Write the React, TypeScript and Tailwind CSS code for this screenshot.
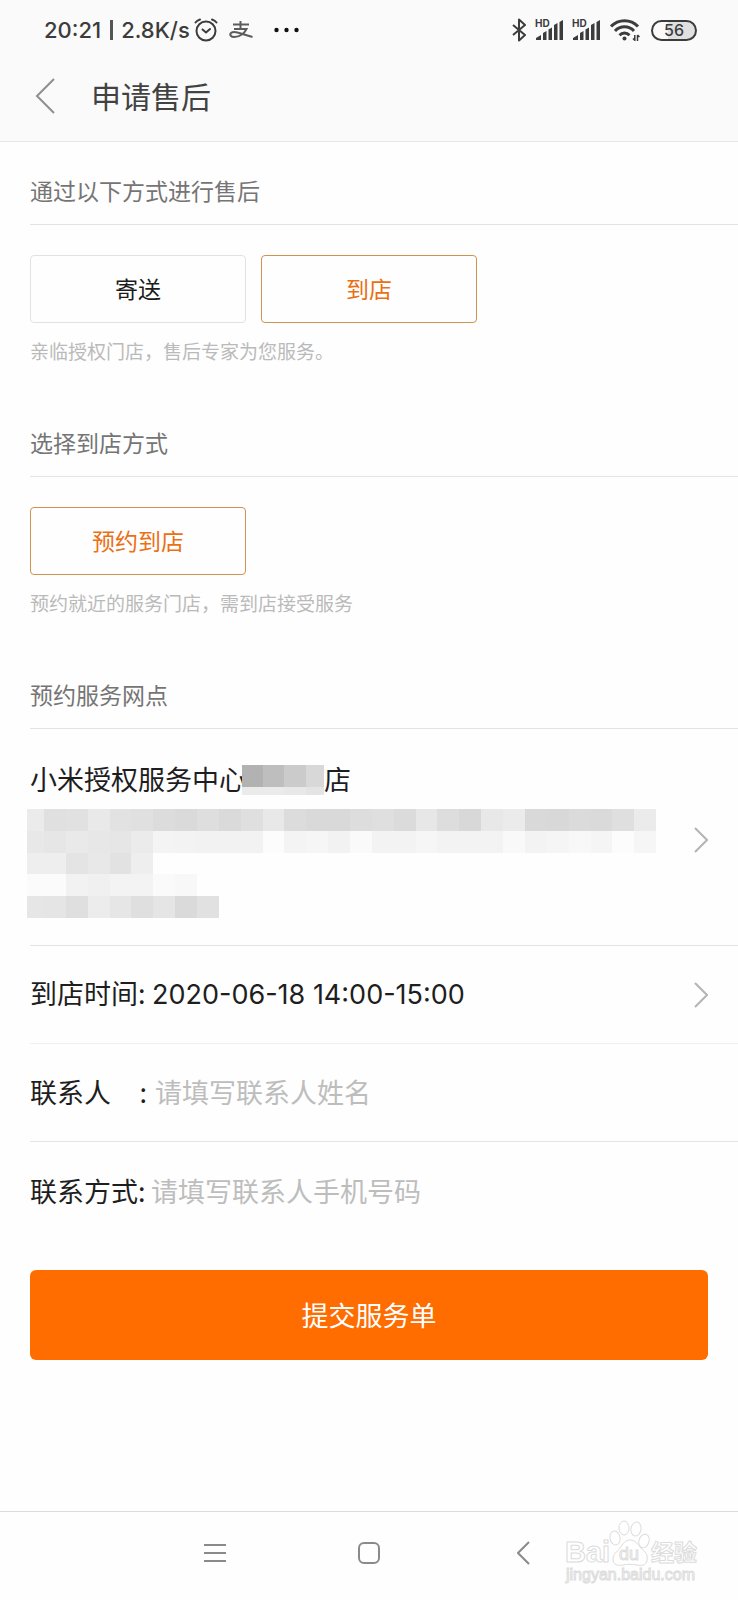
import { useState } from "react";
import type { ReactNode } from "react";

const mosaicRows = [
  "eb e0 e1 e9 e2 e0 dc da de da df e8 dc d9 d9 dd df db e7 dd d8 e8 eb d9 d8 db da df eb",
  "e8 e6 e9 e7 e6 eb f4 f3 f2 f2 f2 fc f4 f6 f2 fa f3 f3 f6 f3 f3 f3 f9 f3 f5 f8 f5 fc f6",
  "ee ee e4 e8 e2 ee",
  "fb fb f2 f0 f3 f3 fa f8",
  "e6 e5 df ec e6 df e5 da e1",
].map((row) => row.split(" "));

// Redacted address: the first column is narrower than the rest
function AddressMosaic() {
  const edge = (col: number) => (col === 0 ? 0 : Math.round(17 + (col - 1) * 21.86));
  const top = (row: number) => Math.round(row * 21.8);
  return (
    <svg width="629" height="109" viewBox="0 0 629 109" className="-ml-[3px] max-w-none" shapeRendering="crispEdges" aria-hidden="true">
      {mosaicRows.map((row, y) =>
        row.map((shade, x) => (
          <rect
            key={`${x}-${y}`}
            x={edge(x)}
            y={top(y)}
            width={edge(x + 1) - edge(x)}
            height={top(y + 1) - top(y)}
            fill={`#${shade}${shade}${shade}`}
          />
        ))
      )}
    </svg>
  );
}

function NameMosaic() {
  return (
    <svg width="82" height="32" viewBox="0 -2 82 32" className="-ml-1" shapeRendering="crispEdges" aria-hidden="true">
      <path fill="#b2b2b2" d="M0 0h21v22H0z" />
      <path fill="#bebebe" d="M21 0h21v22H21z" />
      <path fill="#cbcbcb" d="M42 0h22v22H42z" />
      <path fill="#d8d8d8" d="M64 0h18v22H64z" />
      <path fill="#ebebeb" d="M0 22h42v8H0z" />
      <path fill="#e8e8e8" d="M42 22h22v8H42z" />
      <path fill="#e4e4e4" d="M64 22h18v8H64z" />
    </svg>
  );
}

function Signal() {
  return (
    <svg width="28" height="26" viewBox="0 -4 28 26" fill="#3c3c3c" className="-mt-1" aria-hidden="true">
      <text x="0" y="8" fontSize="10" fontWeight="700" fontFamily="Inter, sans-serif">HD</text>
      <path d="M1 21v-2l5-3v5zM8 21v-7l3.500-2v9zM13.500 21V10.500l3.500-2V21zM19 21V6l3.500-2v17zM24.500 21V3L28 1v20z" />
    </svg>
  );
}

function StatusBar() {
  return (
    <div className="flex h-15 items-center justify-between pl-[44px] pr-[41px] text-[#3c3c3c]">
      <div className="flex items-center">
        <span className="font-[Inter,sans-serif] text-[22px] font-medium">20:21</span>
        <span className="mr-2 ml-[9px] h-5 w-[3px] bg-[#555]" />
        <span className="font-[Inter,sans-serif] text-[22px] font-medium">2.8K/s</span>
        <svg width="24" height="24" viewBox="0 0 24 24" className="ml-1" fill="none" stroke="currentColor" strokeWidth="2" strokeLinecap="round" strokeLinejoin="round" aria-hidden="true">
          <circle cx="12" cy="13" r="9.500" />
          <path d="M8.500 11.500l3.500 3 4-3.500M1.500 4.500q1.500-2 4.500-3M22.500 4.500q-1.500-2-4.500-3" />
        </svg>
        <svg width="24" height="18" viewBox="0 0 24 18" className="ml-[11px]" fill="none" stroke="#5c5c5c" strokeWidth="2" aria-hidden="true">
          <path d="M4 3.500h16M11.500 0v8M5 8h12.500C15.500 12 11 16 5.500 16C1.500 16 0.500 13.500 2 12C5 9.500 10 12 23.500 16" />
        </svg>
        <svg width="25" height="6" viewBox="0 0 25 6" className="ml-[21px]" fill="#111" aria-hidden="true">
          <circle cx="2.500" cy="3" r="2.200" />
          <circle cx="12.500" cy="3" r="2.200" />
          <circle cx="22.500" cy="3" r="2.200" />
        </svg>
      </div>
      <div className="flex items-center">
        <svg width="14" height="24" viewBox="0 0 14 24" fill="none" stroke="currentColor" strokeWidth="2" strokeLinejoin="round" aria-hidden="true">
          <path d="M1 7l12 10-6 5.500V1.500L13 7 1 17" />
        </svg>
        <span className="ml-[9px] flex gap-[9px]">
          <Signal />
          <Signal />
        </span>
        <svg width="30" height="24" viewBox="0 0 30 24" className="ml-2.5" fill="none" stroke="currentColor" strokeWidth="3" aria-hidden="true">
          <path d="M1 8.500a18.500 18.500 0 0 1 27 0M5 13a13 13 0 0 1 19 0M9.500 17.200a7 7 0 0 1 10 0" />
          <circle cx="14.500" cy="20.500" r="2" fill="currentColor" stroke="none" />
          <path strokeWidth="1.500" d="M24.800 17v6M27.500 17v6M23 20.500l2 2M29.500 19l-2-2" />
        </svg>
        <span className="ml-[11px] flex h-[21px] w-[46px] items-center justify-center rounded-full border-2 border-[#3c3c3c] bg-linear-to-r from-transparent from-35% via-[#e0e0e0] via-35% to-[#e0e0e0] to-90% font-[Inter,sans-serif] text-base leading-none font-medium">
          56
        </span>
      </div>
    </div>
  );
}

type SectionProps = {
  title: string;
  children: ReactNode;
};

function Section({ title, children }: SectionProps) {
  return (
    <section className="pl-[30px]">
      <h2 className="border-b border-[#e4e4e4] pt-8 pb-[18px] text-[23px] leading-8 text-[#757575]">{title}</h2>
      {children}
    </section>
  );
}

type OptionProps = {
  label: string;
  active: boolean;
  onClick?: () => void;
};

function Option({ label, active, onClick }: OptionProps) {
  return (
    <button
      type="button"
      aria-pressed={active}
      onClick={onClick}
      className={`h-[68px] w-[216px] rounded border pb-0.5 text-[23px] ${
        active ? "border-[#cf9350] text-[#ea7014]" : "border-[#e2e2e2] text-[#1c1c1c]"
      }`}
    >
      {label}
    </button>
  );
}

function Arrow() {
  return (
    <svg width="14" height="26" viewBox="0 0 14 26" fill="none" stroke="#b4b4b4" strokeWidth="2" className="shrink-0" aria-hidden="true">
      <path d="M1 1l12 12L1 25" />
    </svg>
  );
}

function Watermark() {
  return (
    <svg width="136" height="68" viewBox="0 0 136 68" className="absolute right-[38px] bottom-[14px]" fill="#fff" stroke="#dcdcdc" aria-hidden="true">
      <text x="1" y="44" fontSize="29" fontWeight="700" fontFamily="Liberation Sans, sans-serif">Bai</text>
      <text x="87" y="43" fontSize="23" fontWeight="700" fontFamily="Noto Sans CJK SC, sans-serif">经验</text>
      <path d="M66 22c6 0 8 5 11 8 4 4 7 6 6 12-1 6-6 6-10 5-5-1-9-1-14 0-5 1-10 0-10-6 0-5 4-7 7-11 3-4 5-8 10-8z" />
      <ellipse cx="60" cy="10" rx="5" ry="7" />
      <ellipse cx="72" cy="11" rx="5" ry="7" transform="rotate(10 72 11)" />
      <ellipse cx="51" cy="20" rx="5" ry="7" transform="rotate(-12 51 20)" />
      <ellipse cx="80" cy="23" rx="5" ry="7" transform="rotate(20 80 23)" />
      <text x="55" y="42" fontSize="18" fontFamily="Liberation Sans, sans-serif">du</text>
      <text x="2" y="62" fontSize="16" fontFamily="Liberation Sans, sans-serif">jingyan.baidu.com</text>
    </svg>
  );
}

export default function App() {
  const [method, setMethod] = useState("到店");

  return (
    <div className="flex min-h-screen flex-col bg-[#fefefe] font-['Noto_Sans_CJK_SC',sans-serif] text-[#1e1e1e]">
      <header className="border-b border-[#e8e8e8] bg-[#fafafa] pb-[9px]">
        <StatusBar />
        <div className="flex h-[72px] items-center pl-[35px]">
          <button type="button" aria-label="返回">
            <svg width="20" height="36" viewBox="0 0 20 36" fill="none" stroke="#8e8e8e" strokeWidth="2" aria-hidden="true">
              <path d="M19 1L2 18l17 17" />
            </svg>
          </button>
          <h1 className="ml-9 pb-0.5 text-[30px] text-[#424242]">申请售后</h1>
        </div>
      </header>

      <main className="flex-1">
        <Section title="通过以下方式进行售后">
          <div className="mt-[30px] flex gap-[15px]">
            {["寄送", "到店"].map((label) => (
              <Option key={label} label={label} active={method === label} onClick={() => setMethod(label)} />
            ))}
          </div>
          <p className="mt-3.5 pb-[29px] text-[19px] leading-7 text-[#bababa]">亲临授权门店，售后专家为您服务。</p>
        </Section>

        <Section title="选择到店方式">
          <div className="mt-[30px]">
            <Option label="预约到店" active />
          </div>
          <p className="mt-3.5 pb-[29px] text-[19px] leading-7 text-[#bababa]">预约就近的服务门店，需到店接受服务</p>
        </Section>

        <Section title="预约服务网点">
          <button
            type="button"
            className="flex w-full items-center justify-between border-b border-[#e4e4e4] pt-8 pr-[30px] pb-[27px] text-left text-[27px] leading-9"
          >
            <span className="block">
              <span className="flex h-9 items-center">
                小米授权服务中心
                <NameMosaic />店
              </span>
              <span className="mt-3 block">
                <AddressMosaic />
              </span>
            </span>
            <Arrow />
          </button>

          <button
            type="button"
            className="flex h-[98px] w-full items-center border-b border-[#f0f0f0] pr-[30px] text-left text-[27px]"
          >
            <span className="flex flex-1 items-baseline">
              <span className="w-[122px]">到店时间:</span>
              <span className="font-[Inter,sans-serif]">2020-06-18 14:00-15:00</span>
            </span>
            <Arrow />
          </button>

          <div className="flex h-[98px] items-center border-b border-[#e4e4e4] text-[27px]">
            <label htmlFor="contact" className="flex w-[117px] justify-between">
              <span>联系人</span>
              <span>:</span>
            </label>
            <input id="contact" type="text" placeholder="请填写联系人姓名" className="ml-2 min-w-0 flex-1 outline-none placeholder:text-[#bdbdbd]" />
          </div>

          <div className="flex h-[98px] items-center text-[27px]">
            <label htmlFor="phone" className="w-[117px]">联系方式:</label>
            <input id="phone" type="tel" placeholder="请填写联系人手机号码" className="ml-1 min-w-0 flex-1 outline-none placeholder:text-[#bdbdbd]" />
          </div>
        </Section>

        <div className="px-[30px] pt-[30px] pb-10">
          <button type="submit" className="h-[90px] w-full rounded-md bg-[#ff6c00] text-[27px] text-white">
            提交服务单
          </button>
        </div>
      </main>

      <nav className="relative flex h-[89px] items-center justify-center border-t border-[#dcdcdc] pb-1.5">
        <button type="button" aria-label="菜单" className="flex w-[154px] justify-center">
          <svg width="22" height="22" viewBox="0 0 22 22" stroke="#8a8a8a" strokeWidth="2" aria-hidden="true">
            <path d="M0 3h22M0 11h22M0 19h22" />
          </svg>
        </button>
        <button type="button" aria-label="主屏幕" className="flex w-[154px] justify-center">
          <svg width="22" height="22" viewBox="0 0 22 22" fill="none" stroke="#8a8a8a" strokeWidth="2" aria-hidden="true">
            <rect x="1" y="1" width="20" height="20" rx="5" />
          </svg>
        </button>
        <button type="button" aria-label="后退" className="flex w-[154px] justify-center">
          <svg width="13" height="24" viewBox="0 0 13 24" fill="none" stroke="#8a8a8a" strokeWidth="2" aria-hidden="true">
            <path d="M12 1L1 12l11 11" />
          </svg>
        </button>
        <Watermark />
      </nav>
    </div>
  );
}
